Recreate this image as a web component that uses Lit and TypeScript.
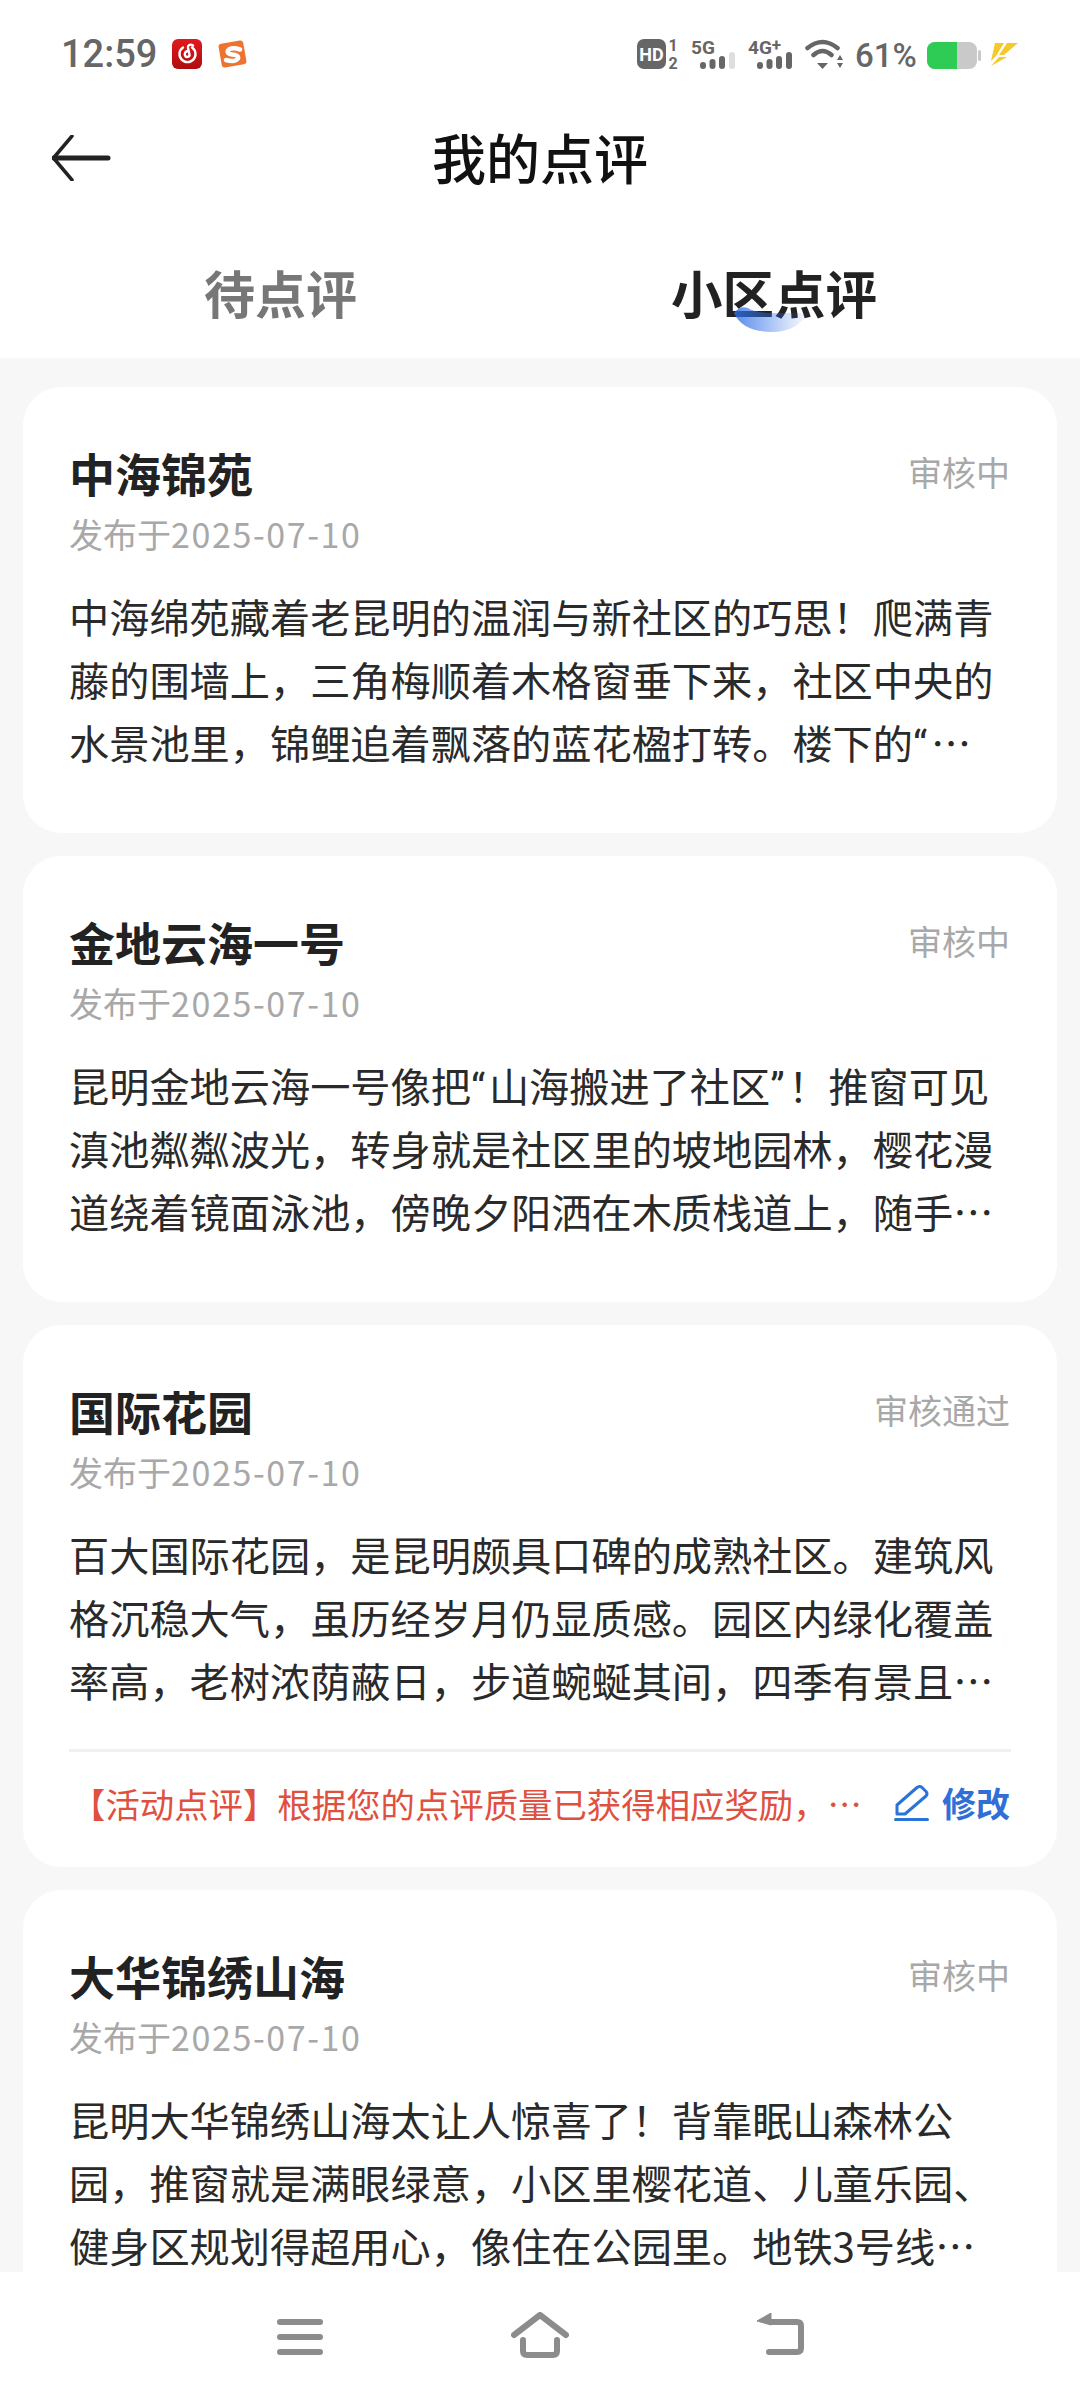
import { LitElement, html, css, svg } from 'lit';
import { customElement } from 'lit/decorators.js';

interface Review {
    name: string;
    status: string;
    date: string;
    lines: string[];
    note?: string;
}

const REVIEWS: Review[] = [
    {
        name: '中海锦苑',
        status: '审核中',
        date: '2025-07-10',
        lines: [
            '中海绵苑藏着老昆明的温润与新社区的巧思！爬满青',
            '藤的围墙上，三角梅顺着木格窗垂下来，社区中央的',
            '水景池里，锦鲤追着飘落的蓝花楹打转。楼下的“…',
        ],
    },
    {
        name: '金地云海一号',
        status: '审核中',
        date: '2025-07-10',
        lines: [
            '昆明金地云海一号像把“山海搬进了社区”！推窗可见',
            '滇池粼粼波光，转身就是社区里的坡地园林，樱花漫',
            '道绕着镜面泳池，傍晚夕阳洒在木质栈道上，随手…',
        ],
    },
    {
        name: '国际花园',
        status: '审核通过',
        date: '2025-07-10',
        lines: [
            '百大国际花园，是昆明颇具口碑的成熟社区。建筑风',
            '格沉稳大气，虽历经岁月仍显质感。园区内绿化覆盖',
            '率高，老树浓荫蔽日，步道蜿蜒其间，四季有景且…',
        ],
        note: '【活动点评】根据您的点评质量已获得相应奖励，…',
    },
    {
        name: '大华锦绣山海',
        status: '审核中',
        date: '2025-07-10',
        lines: [
            '昆明大华锦绣山海太让人惊喜了！背靠眠山森林公',
            '园，推窗就是满眼绿意，小区里樱花道、儿童乐园、',
            '健身区规划得超用心，像住在公园里。地铁3号线…',
        ],
    },
];

const signal = (label: string, plus: boolean, lastOn: boolean) => svg`
    <svg class="ico tall" width="45" height="44" viewBox="0 -7 45 44">
        <text class="net" x="0" y="15">${label}${plus
            ? svg`<tspan class="plus" dy="-3">+</tspan>`
            : ''}</text>
        <rect x="9" y="23" width="6" height="7" rx="3" fill="#666" />
        <rect x="18.5" y="20" width="6" height="10" rx="3" fill="#666" />
        <rect x="28" y="17" width="6" height="13" rx="3" fill="#666" />
        <rect x="38" y="13" width="6" height="17" rx="3" fill=${lastOn ? '#666' : '#dedede'} />
    </svg>
`;

// the quotes in the reference are narrow, the CJK font's are a full em
const withQuotes = (line: string) =>
    line.split(/([“”])/).map((part) =>
        part === '“' || part === '”' ? html`<span class="quote">${part}</span>` : part
    );

@customElement('app-root')
export class AppRoot extends LitElement {
    static override styles = css`
        :host {
            display: block;
            width: 1080px;
            height: 2400px;
            font-family: 'Noto Sans CJK SC', sans-serif;
        }
        .page {
            display: flex;
            flex-direction: column;
            height: 2400px;
            background: #f7f7f7;
            overflow: hidden;
        }

        /* status bar */
        .status {
            flex: none;
            height: 108px;
            display: flex;
            align-items: center;
            padding: 0 61px;
            background: #fff;
            color: #666;
            font-family: Roboto, sans-serif;
        }
        .time {
            width: 95px;
            font-size: 38px;
            font-weight: 500;
            line-height: 44px;
            white-space: nowrap;
        }
        .ico {
            display: block;
            flex: none;
        }
        .logo-netease {
            margin-left: 16px;
        }
        .logo-sogou {
            margin-left: 15px;
        }
        .status-right {
            margin-left: auto;
            display: flex;
            align-items: center;
            gap: 12px;
        }
        .pct {
            width: 60px;
            font-size: 33px;
            font-weight: 500;
            line-height: 40px;
            padding-top: 4px;
            white-space: nowrap;
        }
        .bolt {
            margin-left: -3px;
        }
        .net {
            font: 700 19px Roboto, sans-serif;
            fill: #666;
        }
        .plus {
            font-size: 17px;
        }
        .hd {
            font: 700 18px Roboto, sans-serif;
            fill: #fff;
            text-anchor: middle;
        }
        .sim {
            font: 700 16px Roboto, sans-serif;
            fill: #666;
            text-anchor: middle;
        }

        /* header + tabs */
        .header {
            flex: none;
            height: 100px;
            box-sizing: border-box;
            padding-bottom: 2px;
            display: flex;
            align-items: center;
            justify-content: center;
            position: relative;
            background: #fff;
        }
        .back {
            position: absolute;
            left: 52px;
            top: 27px;
        }
        .title {
            font-size: 54px;
            font-weight: 500;
            line-height: 98px;
            color: #111;
        }
        .tabs {
            flex: none;
            height: 150px;
            box-sizing: border-box;
            display: flex;
            gap: 314px;
            padding: 49px 0 0 204px;
            background: #fff;
        }
        .tab {
            position: relative;
            font-size: 51px;
            font-weight: 700;
            line-height: 70px;
            color: #777;
            white-space: nowrap;
        }
        .tab.on {
            font-size: 51.5px;
            color: #222;
        }
        .bowl {
            position: absolute;
            left: 63px;
            top: 49px;
        }

        /* cards */
        .list {
            flex: 1;
            min-height: 0;
            overflow: hidden;
            display: flex;
            flex-direction: column;
            gap: 23px;
            padding: 29px 23px 0;
        }
        .card {
            flex: none;
            padding: 55px 47px 60px 46px;
            background: #fff;
            border-radius: 38px;
        }
        .card.with-note {
            padding-bottom: 40px;
        }
        .top {
            display: flex;
            justify-content: space-between;
            align-items: center;
        }
        .name {
            font-size: 46px;
            font-weight: 700;
            line-height: 60px;
            color: #222;
        }
        .state {
            font-size: 34px;
            line-height: 60px;
            color: #a8a8a8;
        }
        .date {
            margin-top: 9px;
            font-size: 34px;
            line-height: 46px;
            color: #a8a8a8;
            white-space: nowrap;
        }
        .digits {
            letter-spacing: 1.6px;
        }
        .body {
            margin-top: 27px;
        }
        .line {
            height: 63px;
            font-size: 40.2px;
            line-height: 63px;
            color: #2a2a2a;
            white-space: nowrap;
        }
        .quote {
            display: inline-block;
            width: 18px;
            line-height: 1;
            font-family: Roboto, sans-serif;
        }
        .foot {
            display: flex;
            align-items: center;
            margin: 38px -1px 0 0;
            padding: 27px 1px 0 2px;
            border-top: 3px solid #f0f0f0;
        }
        .note {
            flex: 1;
            font-size: 34.4px;
            line-height: 48px;
            color: #e0503f;
            white-space: nowrap;
        }
        .edit {
            margin-right: 13px;
        }
        .edit-text {
            font-size: 34px;
            font-weight: 700;
            line-height: 48px;
            color: #2f6fd6;
        }

        /* system nav */
        .nav {
            flex: none;
            height: 128px;
            display: grid;
            grid-template-columns: repeat(3, 240px);
            justify-content: center;
            align-items: start;
            justify-items: center;
            padding-top: 47px;
            box-sizing: border-box;
            background: #fff;
        }
        .home {
            margin-top: -7px;
        }
        .ret {
            margin-top: -6px;
        }
    `;

    private renderStatus() {
        return html`
            <div class="status">
                <span class="time">12:59</span>
                <svg class="ico logo-netease" width="30" height="30" viewBox="0 0 30 30">
                    <defs>
                        <linearGradient id="ne" x1="0" y1="0" x2="0" y2="1">
                            <stop offset="0" stop-color="#e2191d" />
                            <stop offset="1" stop-color="#ad0d10" />
                        </linearGradient>
                    </defs>
                    <rect width="30" height="30" rx="6" fill="url(#ne)" />
                    <path
                        d="M11 8.500a8 8 0 1 0 9 0M21 6.500c-3-2-5.500 0-5 2.500l1.500 6.500c.5 2.500-3.500 3.500-4.500 1-.8-2 .5-4 2.500-4.500"
                        fill="none"
                        stroke="#fff"
                        stroke-width="2.400"
                        stroke-linecap="round"
                    />
                </svg>
                <svg class="ico logo-sogou" width="31" height="30" viewBox="0 0 31 30">
                    <rect
                        x="3"
                        y="3"
                        width="25"
                        height="24"
                        rx="3"
                        fill="#ec7330"
                        transform="rotate(-10 15.500 15)"
                    />
                    <path
                        d="M23 10.500Q14 7.500 11 11.500Q9.500 15 15 15.500Q22 16 21 19.500Q18 23.500 9 21"
                        fill="none"
                        stroke="#fff"
                        stroke-width="4.500"
                        stroke-linecap="round"
                    />
                </svg>
                <div class="status-right">
                    <svg class="ico tall" width="42" height="44" viewBox="0 -7 42 44">
                        <rect width="29" height="30" rx="7" fill="#666" />
                        <text class="hd" x="14.500" y="21.500">HD</text>
                        <text class="sim" x="36" y="12">1</text>
                        <text class="sim" x="36" y="30">2</text>
                    </svg>
                    ${signal('5G', false, false)} ${signal('4G', true, true)}
                    <svg class="ico" width="38" height="30" viewBox="0 0 38 30">
                        <path
                            d="M2.500 9Q17.500-3 32.500 9M8.500 16Q17.500 8 26.500 16"
                            fill="none"
                            stroke="#666"
                            stroke-width="4.500"
                            stroke-linecap="round"
                        />
                        <path d="M12 24h11l-5.500 6z" fill="#666" />
                        <path d="M32 21h6l-3-5zM32 24h6l-3 5z" fill="#666" />
                    </svg>
                    <span class="pct">61%</span>
                    <svg class="ico" width="54" height="30" viewBox="0 0 54 30">
                        <rect y="3" width="50" height="27" rx="8" fill="#c9c9c9" />
                        <path d="M8 3h22v27H8a8 8 0 0 1-8-8V11a8 8 0 0 1 8-8z" fill="#2ecc55" />
                        <rect x="51" y="11" width="3" height="11" rx="1.500" fill="#c9c9c9" />
                    </svg>
                    <svg class="ico bolt" width="29" height="30" viewBox="0 0 29 30">
                        <path d="M5 4h9L6 17l-5 5zM17 4h11L14 16H9zM9 18h8L1 27z" fill="#f5c92a" />
                    </svg>
                </div>
            </div>
        `;
    }

    private renderCard(r: Review) {
        return html`
            <section class="card ${r.note ? 'with-note' : ''}">
                <div class="top">
                    <span class="name">${r.name}</span>
                    <span class="state">${r.status}</span>
                </div>
                <div class="date">发布于<span class="digits">${r.date}</span></div>
                <div class="body">
                    ${r.lines.map((l) => html`<div class="line">${withQuotes(l)}</div>`)}
                </div>
                ${r.note
                    ? html`
                          <div class="foot">
                              <span class="note">${r.note}</span>
                              <svg class="ico edit" width="35" height="36" viewBox="0 0 35 36">
                                  <path
                                      d="M3 20L23 2.500Q26 .5 28 2.500L32 6.500Q34 9 32 11L11 29H3z"
                                      fill="none"
                                      stroke="#2a74d8"
                                      stroke-width="3"
                                      stroke-linejoin="round"
                                  />
                                  <rect y="33" width="35" height="3" rx="1.500" fill="#2a74d8" />
                              </svg>
                              <span class="edit-text">修改</span>
                          </div>
                      `
                    : ''}
            </section>
        `;
    }

    override render() {
        return html`
            <div class="page">
                ${this.renderStatus()}
                <div class="header">
                    <svg class="back" width="60" height="46" viewBox="0 0 60 46">
                        <path
                            d="M20 1L1.500 23L20 45"
                            fill="none"
                            stroke="#222"
                            stroke-width="3.500"
                            stroke-linecap="round"
                            stroke-linejoin="round"
                        />
                        <path d="M2 23H56" stroke="#222" stroke-width="5" stroke-linecap="round" />
                    </svg>
                    <span class="title">我的点评</span>
                </div>
                <div class="tabs">
                    <span class="tab">待点评</span>
                    <span class="tab on">
                        小区点评
                        <svg class="bowl" width="74" height="27" viewBox="0 0 74 27">
                            <defs>
                                <linearGradient id="bowl" x1="0" y1="0" x2="1" y2="0">
                                    <stop offset="0" stop-color="#2f6fe8" stop-opacity=".8" />
                                    <stop offset=".75" stop-color="#2f6fe8" stop-opacity=".2" />
                                    <stop offset="1" stop-color="#2f6fe8" stop-opacity=".03" />
                                </linearGradient>
                            </defs>
                            <path d="M0 7Q6-1 14 2Q22 7 36 7H74Q62 27 36 26Q8 25 0 7z" fill="url(#bowl)" />
                        </svg>
                    </span>
                </div>
                <div class="list">${REVIEWS.map((r) => this.renderCard(r))}</div>
                <div class="nav">
                    <svg class="ico" width="46" height="36" viewBox="0 0 46 36">
                        <path
                            d="M3 3H43M3 18H43M3 33H43"
                            stroke="#8c8c8c"
                            stroke-width="6"
                            stroke-linecap="round"
                        />
                    </svg>
                    <svg class="ico home" width="58" height="46" viewBox="0 0 58 46">
                        <path
                            d="M3 23L29 3L55 23M12 28V39Q12 43 16 43H42Q46 43 46 39V28"
                            fill="none"
                            stroke="#8c8c8c"
                            stroke-width="6"
                            stroke-linecap="round"
                            stroke-linejoin="round"
                        />
                    </svg>
                    <svg class="ico ret" width="48" height="42" viewBox="0 0 48 42">
                        <path
                            d="M15 9H41Q45 9 45 13V35Q45 39 41 39H13"
                            fill="none"
                            stroke="#8c8c8c"
                            stroke-width="6"
                            stroke-linecap="round"
                        />
                        <path d="M1 8L15 0V12z" fill="#8c8c8c" stroke="#8c8c8c" stroke-linejoin="round" />
                    </svg>
                </div>
            </div>
        `;
    }
}
